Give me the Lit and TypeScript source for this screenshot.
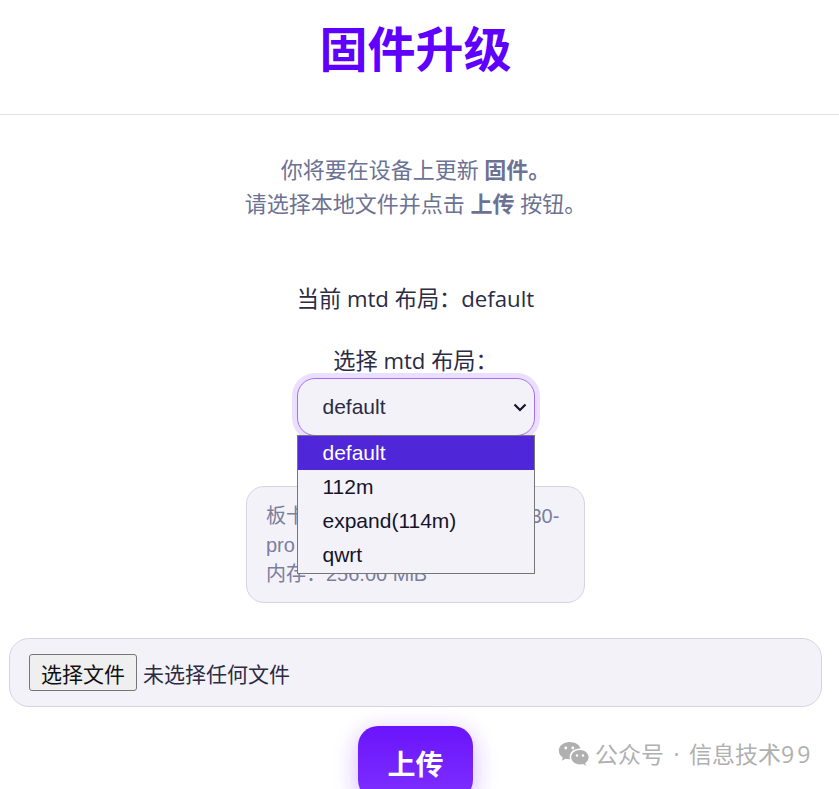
import { LitElement, html, css } from 'lit'
import { customElement, state } from 'lit/decorators.js'

const MTD_LAYOUTS = ['default', '112m', 'expand(114m)', 'qwrt']

@customElement('app-root')
export class AppRoot extends LitElement {
    @state()
    private _layout = 'default'

    static styles = css`
        :host {
            display: block;
            position: relative;
            height: 789px;
            overflow: hidden;
            background: #fff;
            color: #2b2b45;
            font-family: 'Open Sans', 'Noto Sans CJK SC', sans-serif;
        }

        .header {
            box-sizing: border-box;
            height: 115px;
            padding: 14px 8px 0 0;
            border-bottom: 1px solid #e2e2e8;
            text-align: center;
        }

        .title {
            margin: 0;
            font-size: 48px;
            line-height: 70px;
            font-weight: 700;
            color: #5f00ff;
        }

        .main {
            box-sizing: border-box;
            width: 831px;
            padding: 37px 9px 0;
            display: flex;
            flex-direction: column;
            align-items: center;
        }

        .intro {
            margin: 0;
            font-size: 22px;
            line-height: 34px;
            color: #6c7293;
            text-align: center;
        }

        .intro b {
            font-weight: 700;
        }

        .current {
            margin-top: 62px;
            font-size: 22.2px;
            line-height: 34px;
        }

        .pick-label {
            margin-top: 28px;
            font-size: 22.2px;
            line-height: 34px;
        }

        .select-wrap {
            position: relative;
            width: 238px;
            height: 58px;
            z-index: 2;
        }

        .select {
            box-sizing: border-box;
            width: 100%;
            height: 100%;
            display: flex;
            align-items: center;
            justify-content: space-between;
            padding: 0 6px 0 25px;
            border: 1px solid #a56ef7;
            border-radius: 18px;
            background: #f3f2f9;
            box-shadow: 0 0 0 5px #eadfff;
            font-family: 'Liberation Sans', sans-serif;
            font-size: 21px;
            color: #2b2b45;
        }

        .select svg {
            width: 16px;
            height: 16px;
        }

        .menu {
            position: absolute;
            left: 0;
            top: 57px;
            box-sizing: border-box;
            width: 238px;
            height: 139px;
            padding: 0;
            margin: 0;
            list-style: none;
            border: 1px solid #767676;
            background: #f3f2f9;
            font-family: 'Liberation Sans', sans-serif;
            font-size: 21px;
            color: #14142b;
        }

        .menu li {
            height: 34px;
            line-height: 33px;
            padding-left: 25px;
        }

        .menu li.selected {
            background: #4f27d9;
            color: #fff;
        }

        .board {
            box-sizing: border-box;
            width: 339px;
            height: 117px;
            margin-top: 50px;
            padding: 15px 19px;
            border: 1px solid #d6d4e3;
            border-radius: 18px;
            background: #f3f2f9;
            font-family: 'Liberation Sans', 'Noto Sans CJK SC', sans-serif;
            font-size: 20px;
            line-height: 29px;
            color: #7a7f9f;
            white-space: nowrap;
        }

        .file-row {
            box-sizing: border-box;
            width: 813px;
            height: 69px;
            margin-top: 35px;
            display: flex;
            align-items: center;
            gap: 6px;
            padding: 0 19px;
            border: 1px solid #d6d4e3;
            border-radius: 20px;
            background: #f3f2f9;
            font-size: 21px;
        }

        .file-btn {
            box-sizing: border-box;
            width: 108px;
            height: 37px;
            padding: 0;
            border: 1px solid #767676;
            border-radius: 3px;
            background: #efefef;
            color: #111;
            font-family: inherit;
            font-size: 21px;
            white-space: nowrap;
        }

        .upload {
            box-sizing: border-box;
            width: 115px;
            height: 74px;
            margin-top: 19px;
            flex: none;
            border: none;
            border-radius: 20px;
            background: linear-gradient(180deg, #6a14fb, #7e30ff);
            box-shadow: 0 6px 24px rgba(106, 20, 251, 0.3);
            color: #fff;
            font-family: inherit;
            font-size: 28px;
            font-weight: 700;
        }

        .watermark {
            position: absolute;
            left: 558px;
            top: 739px;
            display: flex;
            align-items: center;
            gap: 6px;
            font-size: 23px;
            line-height: 30px;
            color: #b0b0b0;
            white-space: nowrap;
        }

        .watermark svg {
            width: 31px;
            height: 26px;
        }

        .watermark .sep {
            margin: 0 3.5px;
        }

        .watermark .num {
            letter-spacing: 3px;
        }
    `

    render() {
        return html`
            <div class="header">
                <h1 class="title">固件升级</h1>
            </div>

            <div class="main">
                <p class="intro">
                    你将要在设备上更新 <b>固件。</b><br />
                    请选择本地文件并点击 <b>上传</b> 按钮。
                </p>

                <div class="current">当前 mtd 布局：default</div>
                <div class="pick-label">选择 mtd 布局：</div>

                <div class="select-wrap">
                    <div class="select">
                        <span>${this._layout}</span>
                        <svg viewBox="0 0 16 16" fill="none" stroke="#14142b" stroke-width="2.2">
                            <path d="M2.5 5.5 8 11l5.5-5.5" />
                        </svg>
                    </div>
                    <ul class="menu">
                        ${MTD_LAYOUTS.map(
                            (l) => html`<li class=${l === this._layout ? 'selected' : ''}>${l}</li>`
                        )}
                    </ul>
                </div>

                <div class="board">
                    板卡名称： xiaomi,redmi-ax-e30-<br />
                    pro<br />
                    内存：256.00 MiB
                </div>

                <div class="file-row">
                    <button class="file-btn">选择文件</button>
                    <span>未选择任何文件</span>
                </div>

                <button class="upload">上传</button>
            </div>

            <div class="watermark">
                <svg viewBox="0 0 31 26" fill="#b0b0b0">
                    <path d="M11.5 1C5.6 1 .8 4.9.8 9.8c0 2.8 1.6 5.2 4 6.8l-1 3.2 3.7-2c1.2.3 2.4.5 3.6.5h1c-.3-.9-.4-1.7-.4-2.6 0-4.6 4.4-8.2 9.900-8.200h1C21.500 3.800 17 1 11.500 1z" />
                    <path d="M22 9c-4.900 0-8.800 3.200-8.800 7.200s3.900 7.200 8.800 7.200c1 0 2-.2 3-.4l3 1.700-.8-2.700c2-1.300 3.400-3.400 3.400-5.800C30.600 12.200 26.800 9 22 9z" />
                    <g fill="#fff">
                        <circle cx="7.800" cy="7" r="1.400" />
                        <circle cx="14.800" cy="7" r="1.400" />
                        <circle cx="19" cy="14.500" r="1.200" />
                        <circle cx="25" cy="14.500" r="1.200" />
                    </g>
                </svg>
                <span>公众号 <span class="sep">·</span> 信息技术<span class="num">99</span></span>
            </div>
        `
    }
}
